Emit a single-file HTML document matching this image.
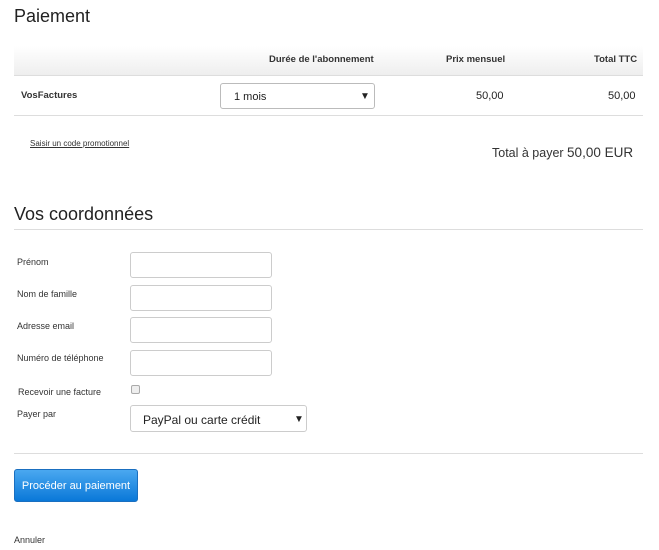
<!DOCTYPE html>
<html><head><meta charset="utf-8"><style>
body{margin:0;width:659px;height:550px;background:#fff;font-family:"Liberation Sans",sans-serif;color:#222;position:relative;overflow:hidden}
.a{position:absolute;white-space:nowrap}
.h{font-size:18px;color:#222}
.s{font-size:10px;color:#333}
.inp{position:absolute;left:130px;width:140px;height:24px;border:1px solid #ccc;border-radius:3px;background:#fff}
.sel{position:absolute;border:1px solid #bbb;border-radius:3px;background:#fff;font-size:12px}
</style></head><body>
<div class="a h" style="left:14px;top:6px">Paiement</div>
<div class="a" style="left:14px;top:46px;width:629px;height:29px;background:linear-gradient(#fff,#eee);border-bottom:1px solid #ddd"></div>
<div class="a s" style="left:269px;top:54px;font-weight:bold;font-size:9.5px">Durée de l'abonnement</div>
<div class="a s" style="left:446px;top:54px;font-weight:bold;font-size:9.5px">Prix mensuel</div>
<div class="a s" style="left:594px;top:54px;font-weight:bold;font-size:9.5px">Total TTC</div>
<div class="a s" style="left:21px;top:90px;font-weight:bold;font-size:9.5px">VosFactures</div>
<div class="sel" style="left:220px;top:83px;width:153px;height:24px"><span class="a" style="left:13px;top:7px;font-size:11px">1 mois</span><span class="a" style="left:139px;top:7px;font-size:10px">▼</span></div>
<div class="a" style="left:476px;top:90px;font-size:11px">50,00</div>
<div class="a" style="left:608px;top:90px;font-size:11px">50,00</div>
<div class="a" style="left:14px;top:115px;width:629px;height:1px;background:#ddd"></div>
<div class="a" style="left:30px;top:139px;font-size:8px;text-decoration:underline;color:#333">Saisir un code promotionnel</div>
<div class="a" style="left:492px;top:145px;font-size:12.5px;color:#333">Total à payer <span style="font-size:13.5px">50,00 EUR</span></div>
<div class="a h" style="left:14px;top:204px">Vos coordonnées</div>
<div class="a" style="left:14px;top:229px;width:629px;height:1px;background:#ddd"></div>
<div class="a s" style="left:17px;top:257px;font-size:9px">Prénom</div>
<div class="a s" style="left:17px;top:289px;font-size:9px">Nom de famille</div>
<div class="a s" style="left:17px;top:321px;font-size:9px">Adresse email</div>
<div class="a s" style="left:17px;top:353px;font-size:9px">Numéro de téléphone</div>
<div class="a s" style="left:18px;top:387px;font-size:9px">Recevoir une facture</div>
<div class="a s" style="left:17px;top:409px;font-size:9px">Payer par</div>
<div class="inp" style="top:252px"></div>
<div class="inp" style="top:285px"></div>
<div class="inp" style="top:317px"></div>
<div class="inp" style="top:350px"></div>
<div class="a" style="left:131px;top:385px;width:7px;height:7px;border:1px solid #aaa;border-radius:2px;background:#eee"></div>
<div class="sel" style="left:130px;top:405px;width:175px;height:25px;border-color:#ccc"><span class="a" style="left:12px;top:7px">PayPal ou carte crédit</span><span class="a" style="left:163px;top:8px;font-size:10px">▼</span></div>
<div class="a" style="left:14px;top:453px;width:629px;height:1px;background:#ddd"></div>
<div class="a" style="left:14px;top:469px;width:124px;height:33px;border-radius:3px;background:linear-gradient(#4aa8f0,#0a78d8);border:1px solid #1a6fc0;box-sizing:border-box;color:#fff;font-size:11px;text-align:center;line-height:33px">Procéder au paiement</div>
<div class="a" style="left:14px;top:535px;font-size:9px;color:#333">Annuler</div>
</body></html>
